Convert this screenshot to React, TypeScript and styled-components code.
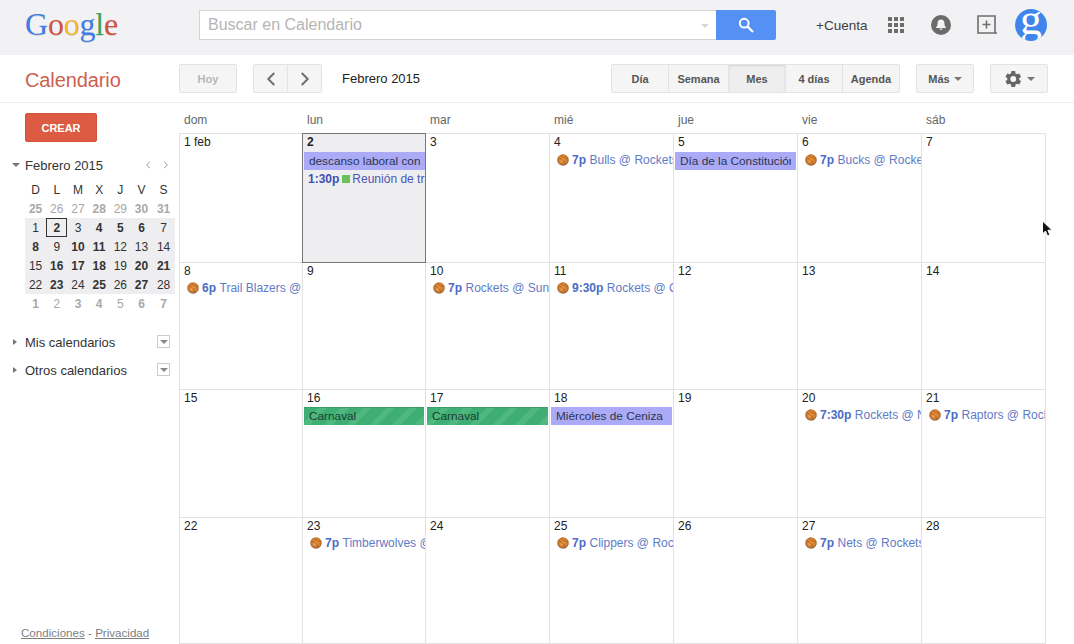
import React from 'react';
import styled, { createGlobalStyle } from 'styled-components';
import { ChevronLeft, ChevronRight } from 'lucide-react';

const Global = createGlobalStyle`
  html, body { margin: 0; padding: 0; background: #fff; }
  body { font-family: "Liberation Sans", Arial, sans-serif; color: #222; }
`;

const Page = styled.div`
  position: relative;
  width: 1074px;
  height: 644px;
  overflow: hidden;
  display: flex;
  flex-direction: column;
`;

const Header = styled.header`
  height: 55px;
  flex: none;
  box-sizing: border-box;
  padding-bottom: 5px;
  background: #f2f1f4;
  display: flex;
  align-items: center;
`;
const Logo = styled.div`
  width: 199px;
  padding: 0 0 2px 25px;
  box-sizing: border-box;
  flex: none;
  font-family: "Liberation Serif", serif;
  font-size: 32px;
  line-height: 32px;
  letter-spacing: -0.2px;
  text-shadow: 0 1px 0 rgba(0, 0, 0, 0.12);
`;
const LogoLetter = styled.span<{ $c: string }>`
  color: ${p => p.$c};
`;
const SearchBox = styled.div`
  width: 517px;
  height: 30px;
  box-sizing: border-box;
  background: #fff;
  border: 1px solid #d4d4d6;
  border-right: none;
  display: flex;
  align-items: center;
  justify-content: space-between;
  padding: 0 7px 0 8px;
  font-size: 16px;
  color: #b5b5b5;
`;
const SearchCaret = styled.span`
  width: 0;
  height: 0;
  border-left: 4px solid transparent;
  border-right: 4px solid transparent;
  border-top: 4px solid #d6d6d6;
  margin-top: 2px;
`;
const SearchButton = styled.div`
  width: 60px;
  height: 30px;
  background: #5590f5;
  border-radius: 0 2px 2px 0;
  display: flex;
  align-items: center;
  justify-content: center;
`;
const Account = styled.span`
  margin-left: 40px;
  width: 72px;
  flex: none;
  font-size: 13.5px;
  color: #404040;
`;
const HeaderIcon = styled.span<{ $w: number; $ml?: number }>`
  display: flex;
  width: ${p => p.$w}px;
  margin-left: ${p => p.$ml ?? 0}px;
  flex: none;
  align-items: center;
  justify-content: center;
`;
const Avatar = styled.div`
  width: 32px;
  height: 32px;
  margin-left: 17px;
  flex: none;
  border-radius: 50%;
  background: #3f85ec;
  overflow: hidden;
  color: #fff;
  font-family: "Liberation Serif", serif;
  font-size: 44px;
  line-height: 22px;
  text-align: center;
`;

const Toolbar = styled.div`
  height: 48px;
  flex: none;
  box-sizing: border-box;
  border-bottom: 1px solid #ececec;
  background: #fff;
  display: flex;
  align-items: flex-start;
`;
const Brand = styled.div`
  width: 179px;
  flex: none;
  padding: 13px 0 0 25px;
  box-sizing: border-box;
  font-size: 20px;
  line-height: 24px;
  letter-spacing: -0.1px;
  color: #cd5f4f;
`;
const ToolButton = styled.div<{ $w: number; $active?: boolean; $dim?: boolean; $ml?: number }>`
  width: ${p => p.$w}px;
  height: 29px;
  margin-top: 9px;
  margin-left: ${p => p.$ml ?? 0}px;
  flex: none;
  box-sizing: border-box;
  border: 1px solid #e3e3e3;
  border-radius: 2px;
  background: ${p => (p.$active ? '#eeeeee' : '#f5f5f5')};
  box-shadow: ${p => (p.$active ? 'inset 0 1px 2px rgba(0,0,0,.1)' : 'none')};
  display: flex;
  align-items: center;
  justify-content: center;
  gap: 4px;
  font-size: 11px;
  font-weight: bold;
  color: ${p => (p.$dim ? '#b5b5b5' : '#555')};
`;
const ButtonGroup = styled.div<{ $ml: number }>`
  display: flex;
  margin-left: ${p => p.$ml}px;
  flex: none;
`;
const GroupItem = styled(ToolButton)<{ $first?: boolean; $last?: boolean }>`
  border-radius: ${p => (p.$first ? '2px 0 0 2px' : p.$last ? '0 2px 2px 0' : '0')};
  border-left-width: ${p => (p.$first ? 1 : 0)}px;
`;
const MonthLabel = styled.div`
  width: 269px;
  margin-left: 20px;
  flex: none;
  padding-top: 16px;
  font-size: 13px;
  line-height: 16px;
  color: #222;
`;
const SmallCaret = styled.span<{ $c?: string }>`
  width: 0;
  height: 0;
  border-left: 4px solid transparent;
  border-right: 4px solid transparent;
  border-top: 4px solid ${p => p.$c ?? '#777'};
`;

const Body = styled.div`
  flex: 1;
  min-height: 0;
  display: flex;
`;
const Sidebar = styled.aside`
  width: 179px;
  flex: none;
  display: flex;
  flex-direction: column;
  padding: 10px 0 0 0;
  box-sizing: border-box;
`;
const CreateButton = styled.div`
  width: 72px;
  height: 29px;
  margin-left: 25px;
  background: #dd5b42;
  border-radius: 2px;
  border: 1px solid #d2553d;
  box-sizing: border-box;
  color: #fff;
  font-size: 11px;
  font-weight: bold;
  display: flex;
  align-items: center;
  justify-content: center;
`;
const MiniHead = styled.div`
  display: flex;
  align-items: center;
  height: 16px;
  margin-top: 15px;
  padding: 0 10px 0 12px;
  font-size: 13px;
  color: #333;
`;
const MiniTitle = styled.span`
  margin-left: 5px;
  flex: 1;
`;
const MiniNav = styled.span`
  display: flex;
  gap: 12px;
`;
const MiniGrid = styled.div`
  width: 150px;
  margin: 7px 0 0 25px;
  display: grid;
  grid-template-columns: repeat(6, 21.2px) 1fr;
  grid-auto-rows: 19px;
`;
const MiniCell = styled.div<{ $kind: 'head' | 'out' | 'in'; $bold?: boolean; $today?: boolean }>`
  display: flex;
  align-items: center;
  justify-content: center;
  font-size: 12px;
  box-sizing: border-box;
  font-weight: ${p => (p.$bold ? 'bold' : 'normal')};
  color: ${p => (p.$kind === 'out' ? '#a8a8a8' : '#333')};
  background: ${p => (p.$kind === 'in' ? '#eeeef0' : 'transparent')};
  border: ${p => (p.$today ? '1px solid #333' : 'none')};
`;
const CalSection = styled.div<{ $mt: number }>`
  display: flex;
  align-items: center;
  height: 16px;
  margin-top: ${p => p.$mt}px;
  padding: 0 9px 0 13px;
  font-size: 13px;
  color: #333;
`;
const RightCaret = styled.span`
  width: 0;
  height: 0;
  border-top: 3.5px solid transparent;
  border-bottom: 3.5px solid transparent;
  border-left: 4px solid #777;
`;
const CalLabel = styled.span`
  margin-left: 8px;
  flex: 1;
`;
const CalMenu = styled.span`
  width: 13px;
  height: 13px;
  box-sizing: border-box;
  border: 1px solid #ccc;
  display: flex;
  align-items: center;
  justify-content: center;
  margin-top: -1px;
`;
const Footer = styled.div`
  margin-top: auto;
  margin-bottom: 4px;
  padding-left: 21px;
  font-size: 11.6px;
  line-height: 14px;
  color: #808080;
`;
const FooterLink = styled.span`
  text-decoration: underline;
`;

const Main = styled.main`
  flex: 1;
  min-width: 0;
  padding-right: 28px;
  display: flex;
  flex-direction: column;
`;
const WeekHead = styled.div`
  display: grid;
  grid-template-columns: 123px 123px repeat(4, 124px) 1fr;
  height: 31px;
  flex: none;
  border-bottom: 1px solid #e2e2e2;
  box-sizing: border-box;
`;
const WeekDay = styled.div`
  font-size: 12px;
  color: #666;
  padding: 10px 0 0 5px;
  line-height: 14px;
`;
const MonthGrid = styled.div`
  flex: 1;
  display: grid;
  grid-template-columns: 123px 123px repeat(4, 124px) 123px;
  grid-template-rows: 129px 127px 128px 1fr;
  border-left: 1px solid #e2e2e2;
  border-right: 1px solid #e2e2e2;
`;
const Cell = styled.div<{ $today?: boolean }>`
  position: relative;
  min-width: 0;
  box-sizing: border-box;
  border-right: 1px solid #e2e2e2;
  border-bottom: 1px solid #e2e2e2;
  background: #fff;
  &:nth-child(7n) { border-right: none; }
  ${p => p.$today && `
    background: #eeeef1;
    outline: 1px solid #777;
    outline-offset: -1px;
    margin-left: -1px;
    margin-top: -1px;
    padding-top: 1px;
    border: none;
    padding-left: 1px;
    z-index: 1;
  `}
`;
const DateNum = styled.div<{ $bold?: boolean }>`
  font-size: 12px;
  line-height: 14px;
  padding: 1px 0 0 4px;
  height: 17px;
  box-sizing: border-box;
  color: #222;
  font-weight: ${p => (p.$bold ? 'bold' : 'normal')};
`;
const Banner = styled.div<{ $kind: 'lav' | 'green'; $mt: number }>`
  height: 18px;
  margin: ${p => p.$mt}px 1px 0 1px;
  padding-left: 5px;
  font-size: 11.8px;
  line-height: 18px;
  color: #2a3550;
  white-space: nowrap;
  overflow: hidden;
  box-sizing: border-box;
  ${p =>
    p.$kind === 'lav'
      ? 'background: #abaaf6; border-right: 5px solid #abaaf6;'
      : 'color: #1d3f30; line-height: 16px; background: repeating-linear-gradient(135deg, #3fae74 0 10px, #4fb780 10px 16px); border-top: 1px solid #3a9d6a;'}
`;
const EventRow = styled.div<{ $mt?: number; $timed?: boolean }>`
  display: flex;
  align-items: center;
  height: 16px;
  margin-top: ${p => p.$mt ?? 1}px;
  padding-left: ${p => (p.$timed ? 5 : 7)}px;
  font-size: 12px;
  color: #5f7bc6;
  white-space: nowrap;
  overflow: hidden;
`;
const EventTime = styled.b`
  color: #4a6cc5;
  margin: 0 3.5px 0 3px;
  flex: none;
`;
const TimedTime = styled.b`
  color: #3f4fb5;
  margin-right: 3px;
  flex: none;
`;
const GreenSquare = styled.span`
  width: 8px;
  height: 8px;
  background: #6cc05b;
  flex: none;
  margin-right: 2px;
`;
const TimedTitle = styled.span`
  color: #4a55b8;
`;
const Cursor = styled.svg`
  position: absolute;
  left: 1041px;
  top: 220px;
`;

const Ball = () => (
  <svg width="12" height="12" viewBox="0 0 12 12" style={{ flex: 'none' }}>
    <defs>
      <radialGradient id="ballFill" cx="50%" cy="45%" r="60%">
        <stop offset="0%" stopColor="#e8963a" />
        <stop offset="65%" stopColor="#cf7a2c" />
        <stop offset="100%" stopColor="#6e5a4e" />
      </radialGradient>
    </defs>
    <circle cx="6" cy="6" r="5.8" fill="url(#ballFill)" />
    <path d="M1.5 4.5C4 4 7 6 8 11M4 1C5 3 8 4.5 11 4.5" fill="none" stroke="#8a4a1c" strokeWidth="0.6" opacity="0.8" />
    <circle cx="4.5" cy="7.5" r="1.1" fill="#f0bd85" opacity="0.7" />
  </svg>
);

type Ev =
  | { t: 'banner'; kind: 'lav' | 'green'; text: string; mt?: number }
  | { t: 'game'; time: string; text: string; mt?: number }
  | { t: 'timed'; time: string; text: string };
type Day = { n: string; today?: boolean; ev?: Ev[] };

const game = (time: string, text: string, mt?: number): Ev => ({ t: 'game', time, text, mt });

const days: Day[] = [
  { n: '1 feb' },
  { n: '2', today: true, ev: [{ t: 'banner', kind: 'lav', text: 'descanso laboral con motivo' }, { t: 'timed', time: '1:30p', text: 'Reunión de trabajo' }] },
  { n: '3' },
  { n: '4', ev: [game('7p', 'Bulls @ Rockets')] },
  { n: '5', ev: [{ t: 'banner', kind: 'lav', text: 'Día de la Constitución' }] },
  { n: '6', ev: [game('7p', 'Bucks @ Rockets')] },
  { n: '7' },
  { n: '8', ev: [game('6p', 'Trail Blazers @ Rockets', 0)] },
  { n: '9' },
  { n: '10', ev: [game('7p', 'Rockets @ Suns', 0)] },
  { n: '11', ev: [game('9:30p', 'Rockets @ Clippers', 0)] },
  { n: '12' },
  { n: '13' },
  { n: '14' },
  { n: '15' },
  { n: '16', ev: [{ t: 'banner', kind: 'green', text: 'Carnaval', mt: 0 }] },
  { n: '17', ev: [{ t: 'banner', kind: 'green', text: 'Carnaval', mt: 0 }] },
  { n: '18', ev: [{ t: 'banner', kind: 'lav', text: 'Miércoles de Ceniza', mt: 0 }] },
  { n: '19' },
  { n: '20', ev: [game('7:30p', 'Rockets @ Nuggets', 0)] },
  { n: '21', ev: [game('7p', 'Raptors @ Rockets', 0)] },
  { n: '22' },
  { n: '23', ev: [game('7p', 'Timberwolves @ Rockets', 0)] },
  { n: '24' },
  { n: '25', ev: [game('7p', 'Clippers @ Rockets', 0)] },
  { n: '26' },
  { n: '27', ev: [game('7p', 'Nets @ Rockets', 0)] },
  { n: '28' },
];

const miniOut1: [string, boolean][] = [['25', true], ['26', false], ['27', false], ['28', true], ['29', false], ['30', true], ['31', true]];
const miniOut2: [string, boolean][] = [['1', true], ['2', false], ['3', true], ['4', true], ['5', false], ['6', true], ['7', true]];
const boldDays = new Set([2, 4, 5, 6, 8, 10, 11, 16, 17, 18, 20, 21, 23, 25, 27]);

const logo: [string, string][] = [['G', '#3f7de0'], ['o', '#d2523f'], ['o', '#f2b72b'], ['g', '#3f7de0'], ['l', '#3da35a'], ['e', '#d2523f']];

export default function App() {
  return (
    <Page>
      <Global />
      <Header>
        <Logo>
          {logo.map(([l, c], i) => (
            <LogoLetter key={i} $c={c}>{l}</LogoLetter>
          ))}
        </Logo>
        <SearchBox>
          Buscar en Calendario
          <SearchCaret />
        </SearchBox>
        <SearchButton>
          <svg width="16" height="16" viewBox="0 0 16 16">
            <circle cx="6.2" cy="6.2" r="4.4" fill="none" stroke="#fff" strokeWidth="2" />
            <path d="M9.6 9.6L15 15" stroke="#fff" strokeWidth="2.2" />
          </svg>
        </SearchButton>
        <Account>+Cuenta</Account>
        <HeaderIcon $w={16}>
          <svg width="16" height="16" viewBox="0 0 16 16" fill="#6e6e6e">
            {[0, 6, 12].flatMap(y => [0, 6, 12].map(x => <rect key={`${x}${y}`} x={x} y={y} width="4" height="4" />))}
          </svg>
        </HeaderIcon>
        <HeaderIcon $w={20} $ml={27}>
          <svg width="20" height="20" viewBox="0 0 20 20">
            <circle cx="10" cy="10" r="10" fill="#6b6b6b" />
            <path d="M10 4.6c-2.3 0-3.4 1.7-3.4 3.7 0 2-.6 3-1.4 3.8v.8h9.6v-.8c-.8-.8-1.4-1.8-1.4-3.8 0-2-1.1-3.7-3.4-3.7z" fill="#f2f1f4" />
            <path d="M8.6 13.6h2.8a1.4 1.4 0 0 1-2.8 0z" fill="#f2f1f4" />
          </svg>
        </HeaderIcon>
        <HeaderIcon $w={21} $ml={26}>
          <svg width="21" height="20" viewBox="0 0 21 20" fill="none" stroke="#6e6e6e" strokeWidth="1.6">
            <path d="M18 18V1H1v17h19" />
            <path d="M9.5 5.5v8M5.5 9.5h8" />
          </svg>
        </HeaderIcon>
        <Avatar>g</Avatar>
      </Header>

      <Toolbar>
        <Brand>Calendario</Brand>
        <ToolButton $w={58} $dim>Hoy</ToolButton>
        <ButtonGroup $ml={16}>
          <GroupItem $w={35} $first><ChevronLeft size={22} color="#6f6f6f" strokeWidth={2.2} /></GroupItem>
          <GroupItem $w={34} $last><ChevronRight size={22} color="#6f6f6f" strokeWidth={2.2} /></GroupItem>
        </ButtonGroup>
        <MonthLabel>Febrero 2015</MonthLabel>
        <ButtonGroup $ml={0}>
          <GroupItem $w={58} $first>Día</GroupItem>
          <GroupItem $w={60}>Semana</GroupItem>
          <GroupItem $w={57} $active>Mes</GroupItem>
          <GroupItem $w={57}>4 días</GroupItem>
          <GroupItem $w={57} $last>Agenda</GroupItem>
        </ButtonGroup>
        <ToolButton $w={58} $ml={16}>Más <SmallCaret /></ToolButton>
        <ToolButton $w={58} $ml={16}>
          <svg width="20" height="20" viewBox="0 0 24 24" fill="#666">
            <path fillRule="evenodd" d="M19.4 13a7.6 7.6 0 0 0 0-2l2.3-1.8-2.3-3.9-2.7 1.1a7.6 7.6 0 0 0-1.7-1L14.6 2.5H10l-.4 2.9a7.6 7.6 0 0 0-1.7 1L5.2 5.3 2.9 9.2 5.2 11a7.6 7.6 0 0 0 0 2l-2.3 1.8 2.3 3.9 2.7-1.1c.5.4 1.1.7 1.7 1l.4 2.9h4.6l.4-2.9c.6-.3 1.2-.6 1.7-1l2.7 1.1 2.3-3.9zM12.3 15.5a3.5 3.5 0 1 1 0-7 3.5 3.5 0 0 1 0 7z" />
          </svg>
          <SmallCaret />
        </ToolButton>
      </Toolbar>

      <Body>
        <Sidebar>
          <CreateButton>CREAR</CreateButton>
          <MiniHead>
            <SmallCaret />
            <MiniTitle>Febrero 2015</MiniTitle>
            <MiniNav>
              <svg width="6" height="8" viewBox="0 0 6 8" fill="none" stroke="#999"><path d="M5 .8L1.6 4 5 7.2" /></svg>
              <svg width="6" height="8" viewBox="0 0 6 8" fill="none" stroke="#999"><path d="M1 .8L4.4 4 1 7.2" /></svg>
            </MiniNav>
          </MiniHead>
          <MiniGrid>
            {['D', 'L', 'M', 'X', 'J', 'V', 'S'].map(d => <MiniCell key={d} $kind="head">{d}</MiniCell>)}
            {miniOut1.map(([d, b]) => <MiniCell key={`a${d}`} $kind="out" $bold={b}>{d}</MiniCell>)}
            {Array.from({ length: 28 }, (_, i) => i + 1).map(d => (
              <MiniCell key={d} $kind="in" $bold={boldDays.has(d)} $today={d === 2}>{d}</MiniCell>
            ))}
            {miniOut2.map(([d, b]) => <MiniCell key={`b${d}`} $kind="out" $bold={b}>{d}</MiniCell>)}
          </MiniGrid>
          <CalSection $mt={21}>
            <RightCaret />
            <CalLabel>Mis calendarios</CalLabel>
            <CalMenu><SmallCaret $c="#888" /></CalMenu>
          </CalSection>
          <CalSection $mt={12}>
            <RightCaret />
            <CalLabel>Otros calendarios</CalLabel>
            <CalMenu><SmallCaret $c="#888" /></CalMenu>
          </CalSection>
          <Footer>
            <FooterLink>Condiciones</FooterLink> - <FooterLink>Privacidad</FooterLink>
          </Footer>
        </Sidebar>

        <Main>
          <WeekHead>
            {['dom', 'lun', 'mar', 'mié', 'jue', 'vie', 'sáb'].map(d => <WeekDay key={d}>{d}</WeekDay>)}
          </WeekHead>
          <MonthGrid>
            {days.map(d => (
              <Cell key={d.n} $today={d.today}>
                <DateNum $bold={d.today}>{d.n}</DateNum>
                {d.ev?.map((e, i) => {
                  if (e.t === 'banner') return <Banner key={i} $kind={e.kind} $mt={e.mt ?? 1}>{e.text}</Banner>;
                  if (e.t === 'timed')
                    return (
                      <EventRow key={i} $timed>
                        <TimedTime>{e.time}</TimedTime>
                        <GreenSquare />
                        <TimedTitle>{e.text}</TimedTitle>
                      </EventRow>
                    );
                  return (
                    <EventRow key={i} $mt={e.mt}>
                      <Ball />
                      <EventTime>{e.time}</EventTime>
                      {e.text}
                    </EventRow>
                  );
                })}
              </Cell>
            ))}
          </MonthGrid>
        </Main>
      </Body>

      <Cursor width="13" height="18" viewBox="0 0 13 18">
        <path d="M1.5 1v13l3-3 2 5 2.4-1-2-4.8h4.2z" fill="#111" stroke="#fff" strokeWidth="1" />
      </Cursor>
    </Page>
  );
}
